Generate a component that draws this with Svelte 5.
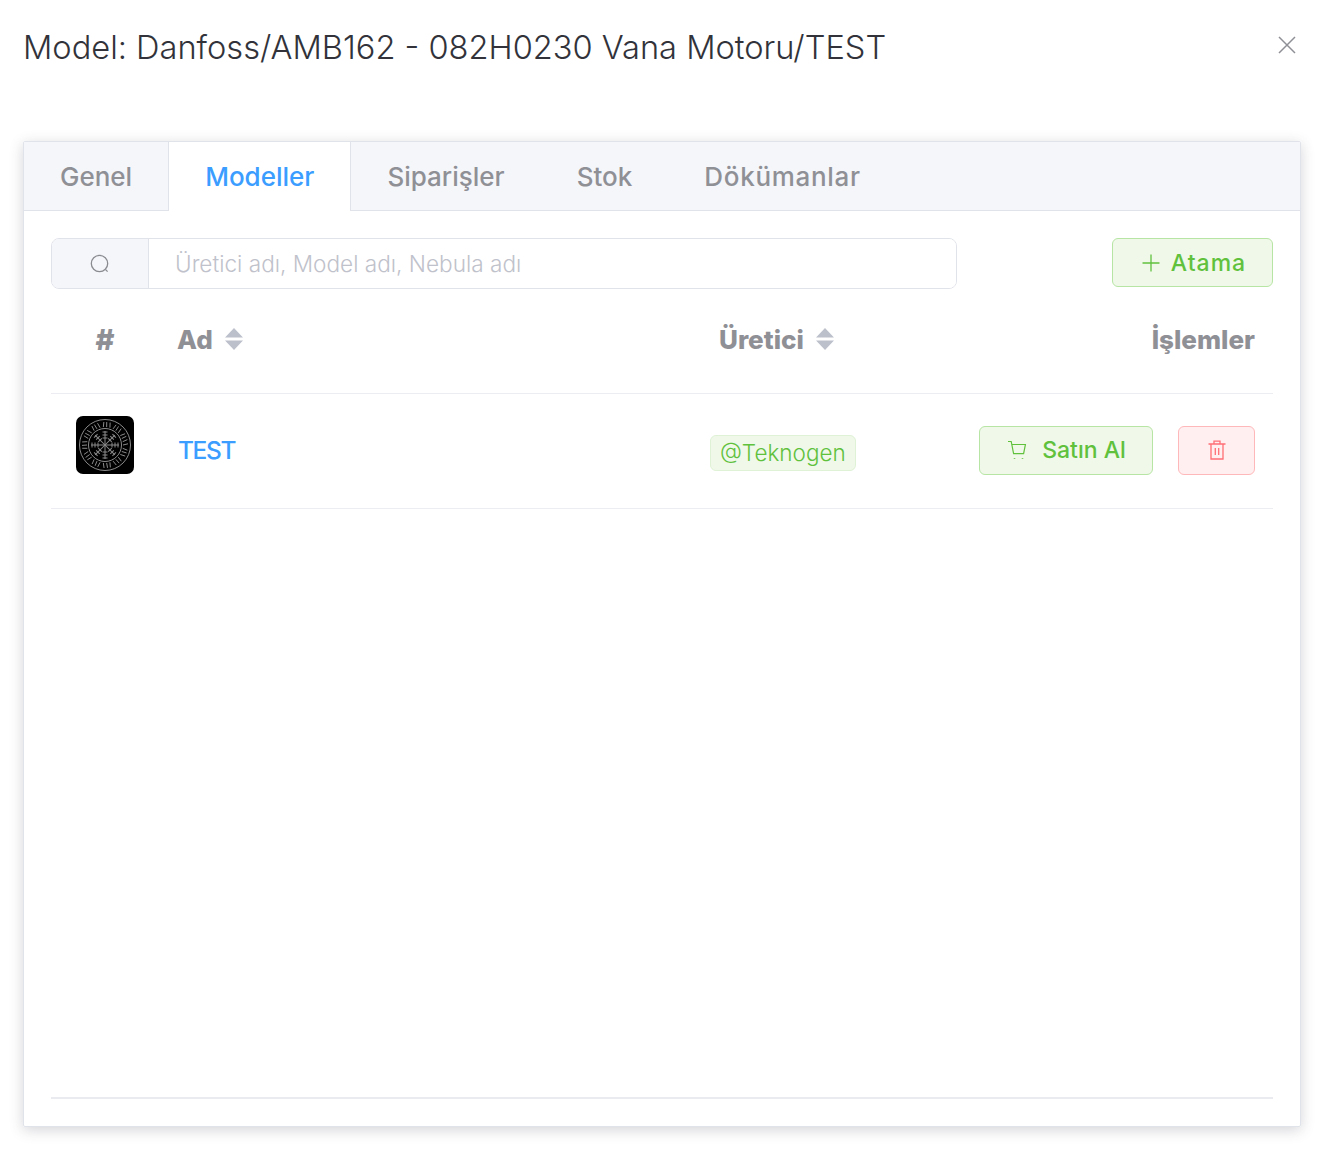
<script>
  const tabs = [
    { label: 'Genel' },
    { label: 'Modeller', active: true },
    { label: 'Siparişler' },
    { label: 'Stok' },
    { label: 'Dökümanlar', wide: true }
  ]

  // rune ring on the avatar
  const ticks = Array.from({ length: 34 }, (_, i) => {
    const a = (i / 34) * Math.PI * 2
    const c = Math.cos(a)
    const s = Math.sin(a)
    const lean = i % 3 === 0 ? 1.2 : i % 3 === 1 ? -1 : 0.4
    return { x1: 29 + 18 * c, y1: 29 + 18 * s, x2: 29 + 23 * c + lean * s, y2: 29 + 23 * s - lean * c }
  })
  const spokes = Array.from({ length: 8 }, (_, i) => (i * 360) / 8)
</script>

<div class="page">
  <header class="head">
    <h1>Model: Danfoss/AMB162 - 082H0230 Vana Motoru/TEST</h1>
    <button class="close" aria-label="Kapat">
      <svg width="20" height="20" viewBox="0 0 20 20" fill="none" stroke="#8f9096" stroke-width="1.5">
        <path d="M2 2l16 16M18 2L2 18" />
      </svg>
    </button>
  </header>

  <section class="card">
    <nav class="tabs">
      {#each tabs as tab}
        <a class="tab" class:active={tab.active} class:wide={tab.wide} href="#top">{tab.label}</a>
      {/each}
    </nav>

    <div class="body">
      <div class="toolbar">
        <div class="search">
          <span class="addon">
            <svg width="22" height="22" viewBox="0 0 22 22" fill="none" stroke="#8a8b91" stroke-width="1.3">
              <circle cx="10.5" cy="10.5" r="8.2" />
              <path d="M16.6 16.6l2 2" />
            </svg>
          </span>
          <input type="text" placeholder="Üretici adı, Model adı, Nebula adı" />
        </div>
        <button class="btn add">
          <svg width="18" height="18" viewBox="0 0 18 18" fill="none" stroke="currentColor" stroke-width="1.3">
            <path d="M9 .5v17M.5 9h17" />
          </svg>
          Atama
        </button>
      </div>

      <table>
        <thead>
          <tr>
            <th class="c-num hash">#</th>
            <th class="c-name">
              <span class="sortable">Ad
                <svg width="18" height="24" viewBox="0 0 18 24" fill="#bcc0cb"><path d="M9 1l9 9.5H0zM0 13.5h18L9 23z" /></svg>
              </span>
            </th>
            <th class="c-maker">
              <span class="sortable">Üretici
                <svg width="18" height="24" viewBox="0 0 18 24" fill="#bcc0cb"><path d="M9 1l9 9.5H0zM0 13.5h18L9 23z" /></svg>
              </span>
            </th>
            <th class="c-actions">İşlemler</th>
          </tr>
        </thead>
        <tbody>
          <tr>
            <td class="c-num">
              <svg class="avatar" width="58" height="58" viewBox="0 0 58 58">
                <rect width="58" height="58" rx="7" fill="#000" />
                <g fill="none" stroke="#8b8b8b">
                  <circle cx="29" cy="29" r="25.5" stroke-width="1" />
                  <circle cx="29" cy="29" r="16.5" stroke-width="1" />
                  {#each ticks as t}
                    <line x1={t.x1} y1={t.y1} x2={t.x2} y2={t.y2} stroke-width="1" />
                  {/each}
                  {#each spokes as deg}
                    <g transform="rotate({deg} 29 29)" stroke-width="1">
                      <path d="M29 29V15M26.5 16h5M26.5 19h5M26.5 22h5" />
                    </g>
                  {/each}
                </g>
              </svg>
            </td>
            <td class="c-name"><a class="name" href="#top">TEST</a></td>
            <td class="c-maker"><span class="tag">@Teknogen</span></td>
            <td class="c-actions">
              <div class="actions">
                <button class="btn buy">
                  <svg width="20" height="20" viewBox="0 0 20 20" fill="none" stroke="currentColor" stroke-width="1.2">
                    <path d="M1 1.5h3.2l2.4 12.2h10l1.8-9.2H5" />
                    <path d="M7.5 18v.8M15.5 18v.8" stroke-width="1.6" />
                  </svg>
                  Satın Al
                </button>
                <button class="btn del" aria-label="Sil">
                  <svg width="18" height="20" viewBox="0 0 18 20" fill="none" stroke="currentColor" stroke-width="1.3">
                    <path d="M.5 4h17M3 4v15h12V4M6 4V1.2h6V4M7.3 8v7M10.7 8v7" />
                  </svg>
                </button>
              </div>
            </td>
          </tr>
        </tbody>
      </table>

      <div class="foot"></div>
    </div>
  </section>
</div>

<style>
  :global(body) {
    margin: 0;
    background: #fff;
    font-family: Inter, "Liberation Sans", sans-serif;
  }
  .page {
    padding: 0 23px 37px;
  }
  .head {
    display: flex;
    justify-content: space-between;
    align-items: center;
    height: 93px;
    box-sizing: border-box;
  }
  h1 {
    margin: 0;
    font-size: 32.6px;
    font-weight: 300;
    color: #32333a;
    white-space: nowrap;
  }
  .close {
    border: 0;
    padding: 0;
    background: none;
    display: flex;
    margin-right: 4px;
    margin-top: -4px;
  }
  .card {
    margin-top: 48px;
    height: 986px;
    box-sizing: border-box;
    border: 1px solid #e1e3ea;
    border-radius: 2px;
    display: flex;
    flex-direction: column;
    box-shadow: 0 3px 14px rgba(60, 60, 80, 0.22);
  }
  .tabs {
    display: flex;
    height: 69px;
    flex: none;
    background: #f5f6fa;
    box-sizing: border-box;
    border-bottom: 1px solid #e1e3ea;
  }
  .tab {
    display: flex;
    align-items: center;
    padding: 0 36px;
    font-size: 26px;
    font-weight: 500;
    color: #8f9096;
    text-decoration: none;
    margin-bottom: -1px;
  }
  .tab.wide {
    letter-spacing: 0.7px;
  }
  .tab.active {
    background: #fff;
    color: #3b9dff;
    border-left: 1px solid #e1e3ea;
    border-right: 1px solid #e1e3ea;
  }
  .body {
    flex: 1;
    display: flex;
    flex-direction: column;
    padding: 27px 27px 27px;
    min-height: 0;
  }
  .toolbar {
    display: flex;
    justify-content: space-between;
    align-items: flex-start;
  }
  .search {
    display: flex;
    width: 906px;
    height: 51px;
    box-sizing: border-box;
    border: 1px solid #e1e3ea;
    border-radius: 8px;
    overflow: hidden;
  }
  .addon {
    width: 96px;
    flex: none;
    display: flex;
    align-items: center;
    justify-content: center;
    background: #f5f6fa;
    border-right: 1px solid #e1e3ea;
  }
  input {
    flex: 1;
    border: 0;
    outline: 0;
    padding: 0 26px;
    font: 300 22.6px Inter, sans-serif;
    color: #32333a;
  }
  input::placeholder {
    color: #bfc2cb;
    opacity: 1;
  }
  .btn {
    display: inline-flex;
    align-items: center;
    justify-content: center;
    height: 49px;
    box-sizing: border-box;
    border-radius: 6px;
    font: 500 23px Inter, sans-serif;
    cursor: pointer;
  }
  .add,
  .buy {
    background: #f0f8ea;
    border: 1px solid #b7e5a3;
    color: #60c13d;
  }
  .add {
    width: 161px;
    gap: 11px;
    padding: 0 0 0 3px;
    letter-spacing: 1px;
  }
  .buy {
    width: 174px;
    gap: 15px;
    padding: 0 2px 0 3px;
  }
  .del {
    width: 77px;
    background: #ffeff0;
    border: 1px solid #ffb8ba;
    color: #ff6f75;
  }
  table {
    width: 100%;
    border-collapse: collapse;
    table-layout: fixed;
  }
  th {
    height: 100px;
    padding: 0 0 4px;
    font-size: 26px;
    font-weight: 800;
    color: #8f9096;
    text-align: left;
    border-bottom: 1px solid #ebedf3;
  }
  th.hash {
    font-size: 29px;
  }
  td {
    height: 112px;
    padding: 0 0 2px;
    border-bottom: 1px solid #ebedf3;
  }
  .c-num {
    width: 108px;
    text-align: center;
  }
  .c-name {
    width: 533px;
    padding-left: 18px;
  }
  td.c-name {
    padding-left: 19px;
  }
  .c-maker {
    width: 250px;
  }
  th.c-maker {
    padding-left: 9px;
  }
  .c-actions {
    padding-right: 18px;
    text-align: right;
  }
  .sortable {
    display: inline-flex;
    align-items: center;
    gap: 12px;
  }
  .avatar {
    display: block;
    margin: -11px auto 0;
  }
  .name {
    font-size: 24.5px;
    font-weight: 500;
    letter-spacing: -1.4px;
    color: #3b9dff;
    text-decoration: none;
  }
  .tag {
    display: inline-block;
    margin-top: 6px;
    padding: 0 9px;
    height: 36px;
    line-height: 33px;
    box-sizing: border-box;
    background: #f0f8ea;
    border: 1px solid #dff2d5;
    border-radius: 6px;
    font-size: 22.5px;
    font-weight: 300;
    color: #60c13d;
  }
  .actions {
    display: flex;
    justify-content: flex-end;
    gap: 25px;
  }
  .foot {
    margin-top: auto;
    height: 2px;
    background: #e9ebf0;
  }
</style>
